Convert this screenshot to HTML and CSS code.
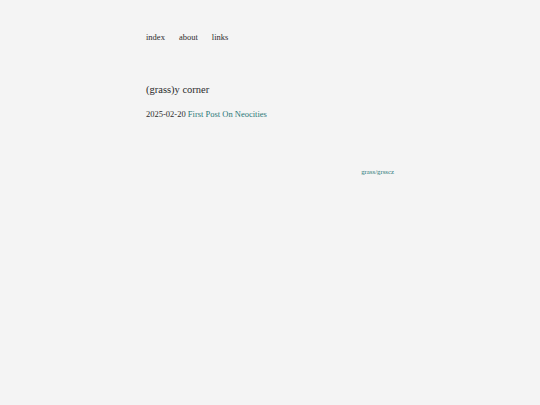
FILE: index.html
```html
<!DOCTYPE html>
<html>
<head>
<meta charset="utf-8">
<link rel="stylesheet" href="styles.css">
</head>
<body>
<div class="page">
  <nav class="nav">
    <a href="#">index</a>
    <a href="#">about</a>
    <a href="#">links</a>
  </nav>
  <main class="main">
    <h1 class="title">(grass)y corner</h1>
    <div class="post"><span class="date">2025-02-20</span> <a class="post-link" href="#">First Post On Neocities</a></div>
  </main>
  <footer class="footer"><a href="#">grass/grsscz</a></footer>
</div>
</body>
</html>
```
FILE: styles.css
```css
html, body {
  margin: 0;
  padding: 0;
  background: #f4f4f4;
}
body {
  font-family: "Liberation Serif", "DejaVu Serif", serif;
  color: #2b2b2b;
}
.page {
  width: 248px;
  margin: 0 auto;
  padding-top: 32px;
}
.nav {
  display: flex;
  gap: 14px;
  font-size: 8.5px;
  line-height: 10px;
}
.nav a {
  color: #2b2b2b;
  text-decoration: none;
}
.main {
  margin-top: 42px;
}
.title {
  font-size: 10.5px;
  font-weight: normal;
  margin: 0;
  line-height: 12px;
}
.post {
  margin-top: 13px;
  font-size: 8.5px;
  line-height: 10px;
}
.post-link {
  color: #2a7878;
  text-decoration: none;
}
.footer {
  margin-top: 49px;
  text-align: right;
  font-size: 6.8px;
  line-height: 8px;
}
.footer a {
  color: #2a7878;
  text-decoration: none;
}
```
